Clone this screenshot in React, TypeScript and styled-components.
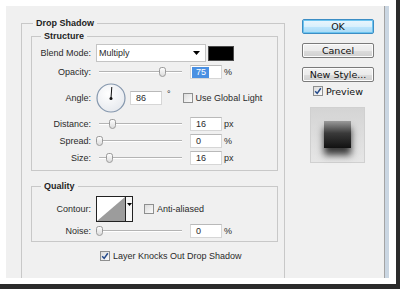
import React from 'react';
import styled, { createGlobalStyle } from 'styled-components';

const GlobalStyle = createGlobalStyle`
  html, body {
    margin: 0;
    padding: 0;
    background: #fff;
  }
  body {
    font-family: "Liberation Sans", Arial, sans-serif;
  }
`;

const Frame = styled.div`
  width: 400px;
  height: 289px;
  box-sizing: border-box;
  background: #fff;
  border-right: 4px solid #2b2b2b;
  border-bottom: 5px solid #2b2b2b;
  padding: 6px 7px 6px 6px;
  display: flex;
`;

const Dialog = styled.div`
  flex: 1;
  display: flex;
  background: #f0f0f0;
  overflow: hidden;
  font-size: 9px;
  color: #2a2a2a;
`;

const Main = styled.div`
  width: 279px;
  flex-shrink: 0;
  box-sizing: border-box;
  padding: 11px 0 0 15px;
`;

const Group = styled.fieldset<{ $outer?: boolean; $pad?: string }>`
  margin: ${(p) => (p.$outer ? '0' : '1px 0 0 0')};
  padding: ${(p) => p.$pad ?? '2px 0 5px 0'};
  border: 1px solid #c8c8c8;
  min-width: 0;
  min-height: ${(p) => (p.$outer ? '290px' : '0')};
  box-sizing: border-box;

  & + & {
    margin-top: 9px;
  }
`;

const Legend = styled.legend<{ $outer?: boolean }>`
  font-weight: bold;
  font-size: 9px;
  line-height: 12px;
  padding: 0 3px;
  margin-left: ${(p) => (p.$outer ? '2px' : '9px')};
  color: #1e1e1e;
`;

const Rows = styled.div<{ $gap?: number }>`
  display: flex;
  flex-direction: column;
  gap: ${(p) => p.$gap ?? 3}px;
`;

const Row = styled.div<{ $h: number }>`
  display: flex;
  align-items: center;
  height: ${(p) => p.$h}px;
`;

const Label = styled.div`
  width: 59px;
  margin-right: 5px;
  text-align: right;
  white-space: nowrap;
`;

const Select = styled.div`
  width: 110px;
  height: 18px;
  box-sizing: border-box;
  background: #fff;
  border: 1px solid #c4c4c4;
  display: flex;
  align-items: center;
  justify-content: space-between;
  padding: 0 5px 0 2px;
  margin-right: 2px;
`;

const Swatch = styled.div`
  width: 26px;
  height: 15px;
  box-sizing: border-box;
  background: #000;
  border: 1px solid #4a4a4a;
`;

const SliderBox = styled.div`
  position: relative;
  width: 86px;
  height: 12px;
  margin-right: 8px;
`;

const Track = styled.div`
  position: absolute;
  left: 3px;
  right: 0;
  top: 5px;
  height: 1px;
  background: #b4b4b4;
  border-bottom: 1px solid #fff;
`;

const Thumb = styled.div`
  position: absolute;
  top: 1px;
  width: 7px;
  height: 10px;
  box-sizing: border-box;
  border: 1px solid #9a9a9a;
  border-radius: 3px 3px 4px 4px;
  background: linear-gradient(#fdfdfd, #dcdcdc);
`;

const Field = styled.div`
  width: 32px;
  height: 14px;
  box-sizing: border-box;
  background: #fff;
  border: 1px solid #d6d6d6;
  border-top-color: #b9b9b9;
  padding-left: 1px;
  display: flex;
  align-items: center;
`;

const FieldText = styled.span<{ $selected?: boolean }>`
  padding: 0 3px 0 4px;
  line-height: 11px;
  background: ${(p) => (p.$selected ? '#4a90e2' : 'transparent')};
  color: ${(p) => (p.$selected ? '#fff' : '#2a2a2a')};
`;

const Unit = styled.span`
  margin-left: 2px;
`;

const Dial = styled.svg`
  margin-right: 4px;
`;

const Degree = styled.span`
  margin-left: 5px;
  margin-right: 12px;
  align-self: flex-start;
  margin-top: 7px;
`;

const Box = styled.div`
  width: 10px;
  height: 10px;
  box-sizing: border-box;
  border: 1px solid #8e8f8f;
  background: linear-gradient(135deg, #dcdcdc, #fbfbfb);
  display: flex;
  align-items: center;
  justify-content: center;
  flex-shrink: 0;
`;

const CheckText = styled.span`
  margin-left: 3px;
  white-space: nowrap;
`;

const Contour = styled.div`
  display: flex;
  height: 26px;
  box-sizing: border-box;
  border: 1px solid #222;
  margin-right: 11px;
`;

const ContourArrow = styled.div`
  width: 7px;
  background: #f7f7f7;
  border-left: 1px solid #222;
  display: flex;
  justify-content: center;
  padding-top: 6px;
  box-sizing: border-box;
`;

const KnockRow = styled.div`
  display: flex;
  align-items: center;
  height: 10px;
  margin: 9px 0 0 69px;
`;

const Side = styled.div`
  flex: 1;
  display: flex;
  flex-direction: column;
  align-items: flex-start;
  padding: 13px 0 0 17px;
`;

const Button = styled.div<{ $primary?: boolean }>`
  width: 72px;
  height: 15px;
  box-sizing: border-box;
  border: 1px solid ${(p) => (p.$primary ? '#3c8dc4' : '#7a7a7a')};
  border-radius: 2px;
  background: ${(p) =>
    p.$primary
      ? 'linear-gradient(#eaf6fd 0%, #d9f0fc 50%, #bee6fd 51%, #a7d9f5 100%)'
      : 'linear-gradient(#f2f2f2 0%, #ebebeb 50%, #dddddd 51%, #cfcfcf 100%)'};
  box-shadow: inset 0 0 0 1px ${(p) => (p.$primary ? '#6cc4ef' : '#fcfcfc')};
  font-family: "DejaVu Sans", sans-serif;
  font-size: 9.5px;
  color: #111;
  display: flex;
  align-items: center;
  justify-content: center;
  margin-bottom: 9px;
`;

const PreviewRow = styled.div`
  display: flex;
  align-items: center;
  height: 12px;
  margin: -6px 0 0 11px;
  font-family: "DejaVu Sans", sans-serif;
  font-size: 9.5px;
  color: #111;
`;

const PreviewSwatch = styled.div`
  width: 55px;
  height: 56px;
  box-sizing: border-box;
  margin: 10px 0 0 8px;
  background: linear-gradient(#d4d4d4, #e6e6e6);
  border: 1px solid #d0d0d0;
  display: flex;
  justify-content: center;
  padding-top: 13px;
`;

const PreviewSquare = styled.div`
  width: 27px;
  height: 27px;
  background: linear-gradient(#9a9a9a, #3a3a3a 45%, #111);
  box-shadow: 0 7px 7px rgba(0, 0, 0, 0.75);
`;

const Edge = styled.div`
  width: 5px;
  box-sizing: border-box;
  border-left: 1px solid #a4a4a4;
  background: #cad6e2;
`;

const Check = ({ checked }: { checked?: boolean }) => (
  <Box>
    {checked && (
      <svg width="8" height="8" viewBox="0 0 8 8">
        <path d="M1.2 4.2 L3.2 6.4 L6.8 1.2" fill="none" stroke="#23498a" strokeWidth="1.5" />
      </svg>
    )}
  </Box>
);

const Slider = ({ at }: { at: number }) => (
  <SliderBox>
    <Track />
    <Thumb style={{ left: at - 3 }} />
  </SliderBox>
);

type SliderSpec = { label: string; at: number; value: string; unit: string; selected?: boolean };

const SliderRow = ({ label, at, value, unit, selected }: SliderSpec) => (
  <Row $h={14}>
    <Label>{label}</Label>
    <Slider at={at} />
    <Field>
      <FieldText $selected={selected}>{value}</FieldText>
    </Field>
    <Unit>{unit}</Unit>
  </Row>
);

const AngleDial = () => (
  <Dial width="30" height="30" viewBox="0 0 30 30">
    <defs>
      <radialGradient id="dialFill" cx="0.4" cy="0.35" r="0.7">
        <stop offset="0" stopColor="#ffffff" />
        <stop offset="1" stopColor="#e6e9ee" />
      </radialGradient>
    </defs>
    <circle cx="15" cy="15" r="14" fill="url(#dialFill)" stroke="#8597ad" strokeWidth="1.2" />
    <line x1="15" y1="15" x2="15.8" y2="4" stroke="#111" strokeWidth="1" />
    <circle cx="15" cy="15.5" r="1.5" fill="#111" />
  </Dial>
);

const App: React.FC = () => (
  <>
    <GlobalStyle />
    <Frame>
      <Dialog>
        <Main>
          <Group $outer $pad="0 6px 0 9px">
            <Legend $outer>Drop Shadow</Legend>
            <Group>
              <Legend>Structure</Legend>
              <Rows>
                <Row $h={18}>
                  <Label>Blend Mode:</Label>
                  <Select>
                    <span>Multiply</span>
                    <svg width="7" height="4" viewBox="0 0 7 4">
                      <path d="M0 0 H7 L3.5 4 Z" fill="#000" />
                    </svg>
                  </Select>
                  <Swatch />
                </Row>
                <SliderRow label="Opacity:" at={66} value="75" unit="%" selected />
                <Row $h={32}>
                  <Label>Angle:</Label>
                  <AngleDial />
                  <Field>
                    <FieldText>86</FieldText>
                  </Field>
                  <Degree>°</Degree>
                  <Check />
                  <CheckText>Use Global Light</CheckText>
                </Row>
                <SliderRow label="Distance:" at={16} value="16" unit="px" />
                <SliderRow label="Spread:" at={3} value="0" unit="%" />
                <SliderRow label="Size:" at={13} value="16" unit="px" />
              </Rows>
            </Group>
            <Group $pad="4px 0 3px 0">
              <Legend>Quality</Legend>
              <Rows $gap={2}>
                <Row $h={26}>
                  <Label>Contour:</Label>
                  <Contour>
                    <svg width="28" height="24" viewBox="0 0 28 24">
                      <rect width="28" height="24" fill="#fff" />
                      <polygon points="0,24 28,0 28,24" fill="#9c9c9c" />
                    </svg>
                    <ContourArrow>
                      <svg width="5" height="3" viewBox="0 0 5 3">
                        <path d="M0 0 H5 L2.5 3 Z" fill="#000" />
                      </svg>
                    </ContourArrow>
                  </Contour>
                  <Check />
                  <CheckText>Anti-aliased</CheckText>
                </Row>
                <SliderRow label="Noise:" at={3} value="0" unit="%" />
              </Rows>
            </Group>
            <KnockRow>
              <Check checked />
              <CheckText>Layer Knocks Out Drop Shadow</CheckText>
            </KnockRow>
          </Group>
        </Main>
        <Side>
          <Button $primary>OK</Button>
          <Button>Cancel</Button>
          <Button>New Style...</Button>
          <PreviewRow>
            <Check checked />
            <CheckText>Preview</CheckText>
          </PreviewRow>
          <PreviewSwatch>
            <PreviewSquare />
          </PreviewSwatch>
        </Side>
        <Edge />
      </Dialog>
    </Frame>
  </>
);

export default App;
